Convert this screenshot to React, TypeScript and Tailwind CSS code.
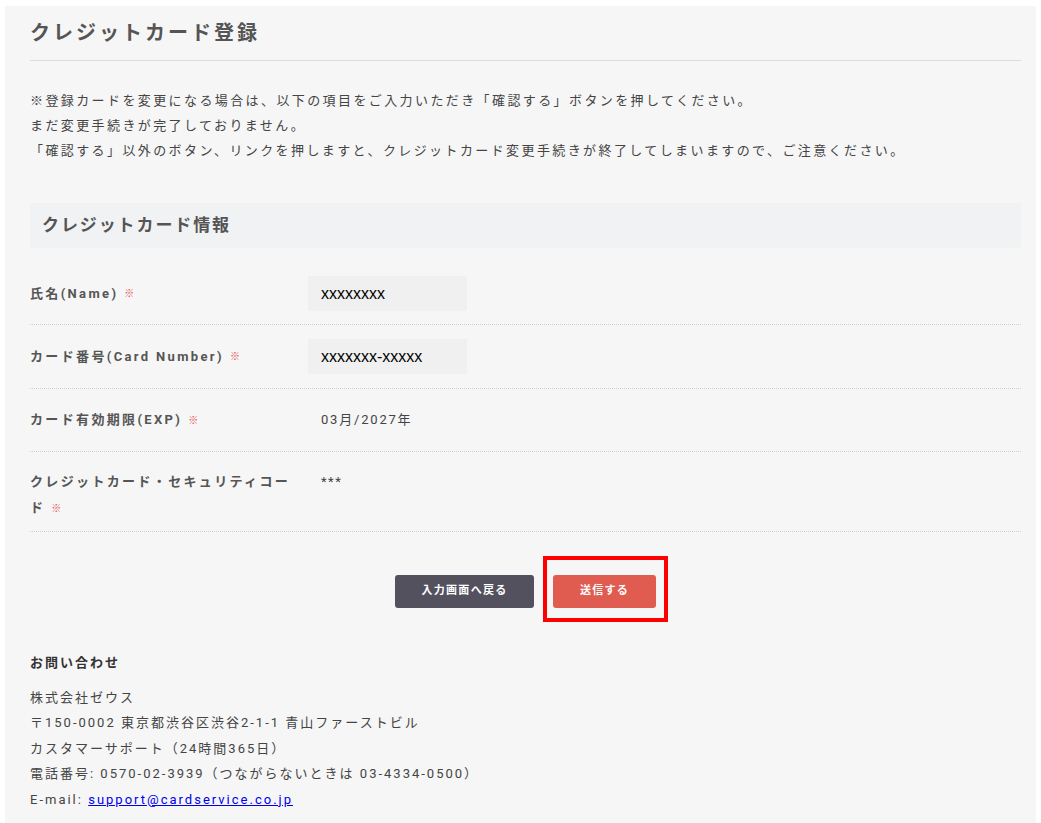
const fieldRows = [
  { label: '氏名(Name)', value: 'xxxxxxxx', input: true, h: 'h-[62px]' },
  { label: 'カード番号(Card Number)', value: 'xxxxxxx-xxxxx', input: true, h: 'h-[64px]' },
  { label: 'カード有効期限(EXP)', value: '03月/2027年', input: false, h: 'h-[63px]' },
];

function Required() {
  return <span className="ml-[6px] inline-block align-middle text-[10px] font-normal leading-none tracking-normal text-[#e04a4a]">※</span>;
}

export default function App() {
  return (
    <div
      className="min-h-screen bg-white px-[5px] pt-[6px]"
      style={{ fontFamily: "Roboto, 'Noto Sans CJK JP', sans-serif" }}
    >
      <div className="bg-[#f6f6f6] pl-[25px] pr-[15px] pt-[12px] pb-[20px]">
        <h1 className="text-[20px] font-bold leading-[30px] tracking-[3px] text-[#555]">
          クレジットカード登録
        </h1>
        <div className="mt-[12px] h-px bg-[#dcdcdc]" />

        <div className="mt-[27px] text-[13px] leading-[25px] tracking-[2.4px] text-[#444]">
          <p>※登録カードを変更になる場合は、以下の項目をご入力いただき「確認する」ボタンを押してください。</p>
          <p>まだ変更手続きが完了しておりません。</p>
          <p>「確認する」以外のボタン、リンクを押しますと、クレジットカード変更手続きが終了してしまいますので、ご注意ください。</p>
        </div>

        <div className="mt-[40px] flex h-[45px] items-center bg-[#f1f2f4] pl-[12px]">
          <h2 className="text-[17px] font-bold tracking-[1.9px] text-[#555]">クレジットカード情報</h2>
        </div>

        <div className="mt-[15px]">
          {fieldRows.map((r) => (
            <div
              key={r.label}
              className={`flex items-center border-b border-dotted border-[#cfcfcf] ${r.h}`}
            >
              <div className="w-[278px] shrink-0 pr-[10px] text-[13px] font-bold leading-[26px] tracking-[2.35px] text-[#555]">
                {r.label}
                <Required />
              </div>
              {r.input ? (
                <div
                  className="flex h-[35px] w-[159px] items-center bg-[#f0f0f0] pl-[13px] text-[16px] text-black"
                  style={{ fontFamily: "'Liberation Sans', Arial, sans-serif" }}
                >
                  {r.value}
                </div>
              ) : (
                <div className="pl-[13px] text-[13px] tracking-[1.8px] text-[#444]">{r.value}</div>
              )}
            </div>
          ))}
          <div className="flex h-[80px] items-start border-b border-dotted border-[#cfcfcf] pt-[17px]">
            <div className="w-[278px] shrink-0 pr-[10px] text-[13px] font-bold leading-[26px] tracking-[2.35px] text-[#555]">
              クレジットカード・セキュリティコード
              <Required />
            </div>
            <div className="pl-[13px] text-[13px] leading-[26px] tracking-[1.5px] text-[#444]">***</div>
          </div>
        </div>

        <div className="mt-[43px] flex justify-center gap-[19px]">
          <button className="h-[33px] w-[139px] rounded-[3px] bg-[#54515f] text-[11px] font-bold tracking-[1.3px] text-white">
            入力画面へ戻る
          </button>
          <div className="relative">
            <button className="h-[33px] w-[103px] rounded-[3px] bg-[#e05c50] text-[11px] font-bold tracking-[1.3px] text-white">
              送信する
            </button>
            <div className="pointer-events-none absolute -left-[10px] -top-[19px] h-[66px] w-[125px] border-4 border-[#ff0000]" />
          </div>
        </div>

        <div className="mt-[42px] text-[13px] leading-[25.5px] tracking-[2px] text-[#444]">
          <p className="font-bold text-[#333]">お問い合わせ</p>
          <p className="mt-[9px]">株式会社ゼウス</p>
          <p>〒150-0002 東京都渋谷区渋谷2-1-1 青山ファーストビル</p>
          <p>カスタマーサポート（24時間365日）</p>
          <p>電話番号: 0570-02-3939（つながらないときは 03-4334-0500）</p>
          <p>
            E-mail:{' '}
            <a href="#" className="text-[#0000ee] underline">
              support@cardservice.co.jp
            </a>
          </p>
        </div>
      </div>
    </div>
  );
}
